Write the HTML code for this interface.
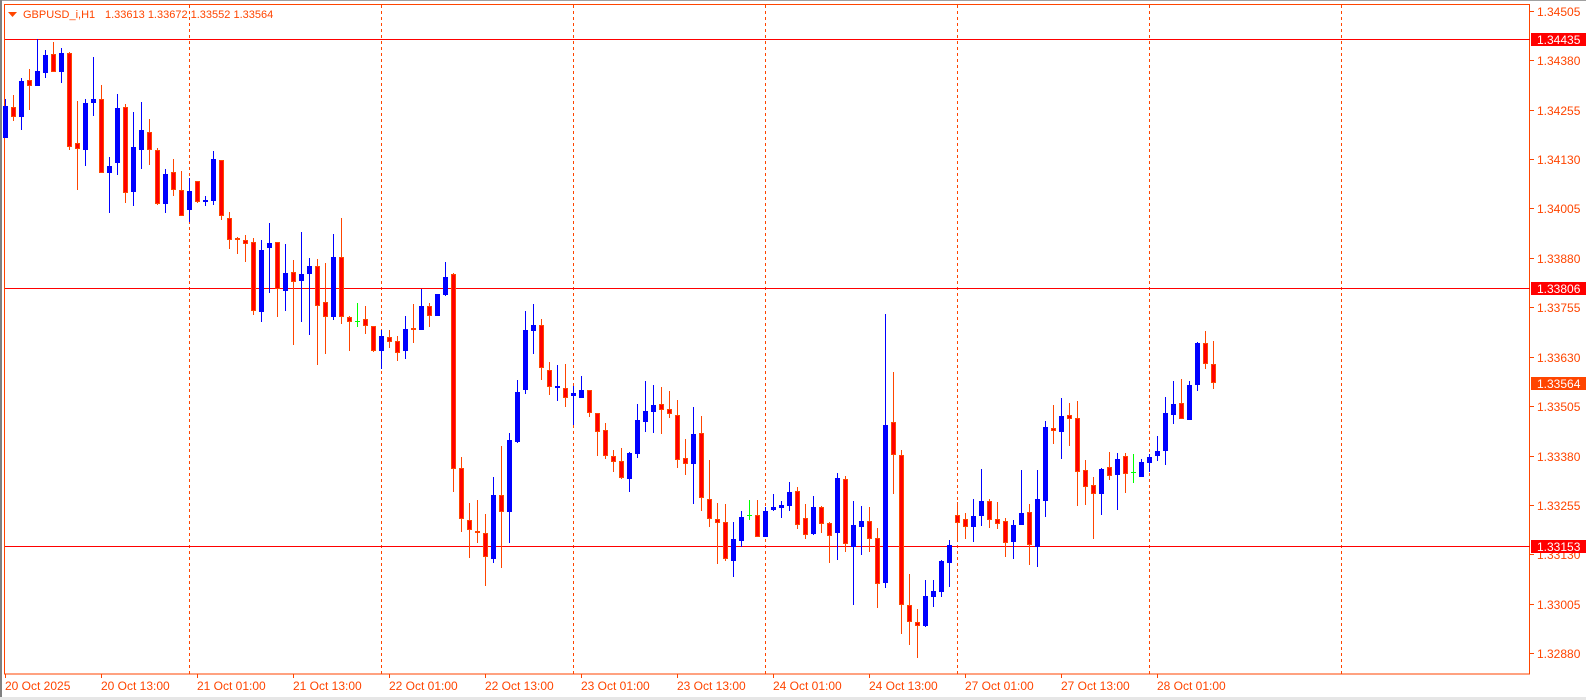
<!DOCTYPE html>
<html><head><meta charset="utf-8"><style>
html,body{margin:0;padding:0;background:#fff;}
svg{display:block;}
text{font-family:"Liberation Sans",sans-serif;}
</style></head><body>
<svg width="1586" height="700" viewBox="0 0 1586 700" xmlns="http://www.w3.org/2000/svg">
<rect x="0" y="0" width="1586" height="700" fill="#fff"/>
<rect x="0" y="0" width="1586" height="1" fill="#a0a0a0"/>
<rect x="0" y="0" width="2" height="700" fill="#808080"/>
<rect x="0" y="697" width="1586" height="3" fill="#e6e6e6"/>
<!-- frame -->
<rect x="4.5" y="4.5" width="1525" height="669.5" fill="none" stroke="#ff4500" stroke-width="1"/>
<!-- dashed separators -->
<g stroke="#ff4500" stroke-width="1" stroke-dasharray="3,3">
<path d="M189.5 5V674M381.5 5V674M573.5 5V674M765.5 5V674M957.5 5V674M1149.5 5V674M1341.5 5V674"/>
</g>
<!-- horizontal lines -->
<g stroke="#ff0000" stroke-width="1">
<path d="M5 39.5H1530M5 288.5H1530M5 546.5H1530"/>
</g>
<!-- wicks -->
<path fill="none" stroke="#0000ff" stroke-width="1" d="M5.5 99V138M21.5 78V130M37.5 39V86M45.5 50V78M61.5 48V83M85.5 99V166M93.5 57V116M109.5 157V213M117.5 94V175M133.5 112V206M141.5 102V169M165.5 169V213M189.5 178V222M205.5 196V206M213.5 151V205M261.5 240V322M269.5 223V293M285.5 244V311M301.5 232V322M309.5 258V335M333.5 234V320M381.5 330V369M405.5 316V359M421.5 289V330M437.5 294V316M445.5 262V296M493.5 477V563M509.5 433V543M517.5 380V443M525.5 311V394M533.5 304V354M557.5 365V401M573.5 386V425M581.5 376V398M629.5 452V492M637.5 404V458M645.5 381V432M653.5 385V433M693.5 407V504M733.5 522V577M741.5 511V547M765.5 507V537M773.5 494V511M781.5 501V518M789.5 482V511M813.5 496V535M837.5 473V560M853.5 501V605M861.5 506V555M885.5 314V588M925.5 580V627M933.5 580V607M941.5 560V597M949.5 540V587M973.5 499V542M981.5 469V526M1013.5 520V559M1021.5 470V525M1037.5 470V567M1045.5 421V517M1061.5 398V459M1101.5 468V515M1117.5 453V510M1141.5 459V477M1149.5 454V472M1157.5 436V461M1165.5 397V465M1173.5 381V424M1189.5 381V420M1197.5 342V391"/>
<path fill="none" stroke="#ff4500" stroke-width="1" d="M13.5 95V121M29.5 69V110M53.5 42V72M69.5 52V150M77.5 101V190M101.5 85V173M125.5 104V203M149.5 119V165M157.5 148V205M173.5 159V196M181.5 171V216M197.5 181V203M221.5 160V220M229.5 212V249M237.5 237V254M245.5 235V262M253.5 238V315M277.5 242V317M293.5 260V345M317.5 259V365M325.5 263V354M341.5 218V324M349.5 316V351M365.5 306V334M373.5 326V352M389.5 330V348M397.5 336V361M413.5 304V343M429.5 303V327M453.5 273V492M461.5 457V532M469.5 503V558M477.5 500V543M485.5 514V586M501.5 446V568M541.5 319V380M549.5 362V395M565.5 364V407M589.5 390V417M597.5 413V456M605.5 423V459M613.5 450V472M621.5 448V479M661.5 387V434M669.5 391V418M677.5 400V468M685.5 439V475M701.5 416V511M709.5 460V527M717.5 503V564M725.5 504V561M757.5 500V537M797.5 487V529M805.5 504V539M821.5 506V533M829.5 522V563M845.5 476V552M869.5 507V552M877.5 528V608M893.5 372V494M901.5 450V634M909.5 574V645M917.5 609V658M957.5 502V541M965.5 513V539M989.5 499V528M997.5 502V529M1005.5 518V557M1029.5 504V565M1053.5 405V444M1069.5 403V446M1077.5 401V506M1085.5 460V505M1093.5 477V539M1109.5 452V480M1125.5 453V493M1181.5 379V419M1205.5 331V369M1213.5 341V389"/>
<path fill="none" stroke="#00ff00" stroke-width="1" d="M357.5 303V327M355 321.5H360M749.5 500V520M747 515.5H752M1133.5 454V483M1131 472.5H1136"/>
<!-- bodies -->
<path fill="#0000ff" d="M3 106h5v32h-5zM19 81h5v36h-5zM35 71h5v15h-5zM43 55h5v18h-5zM59 53h5v19h-5zM83 103h5v47h-5zM91 99h5v4h-5zM107 166h5v7h-5zM115 108h5v55h-5zM131 147h5v45h-5zM139 130h5v20h-5zM163 174h5v30h-5zM187 191h5v19h-5zM203 200h5v2h-5zM211 159h5v42h-5zM259 250h5v62h-5zM267 243h5v5h-5zM283 273h5v18h-5zM299 274h5v7h-5zM307 266h5v8h-5zM331 257h5v60h-5zM379 336h5v15h-5zM403 329h5v22h-5zM419 306h5v24h-5zM435 294h5v22h-5zM443 277h5v18h-5zM491 495h5v64h-5zM507 440h5v72h-5zM515 392h5v50h-5zM523 330h5v60h-5zM531 325h5v6h-5zM555 386h5v2h-5zM571 393h5v3h-5zM579 390h5v8h-5zM627 453h5v26h-5zM635 420h5v34h-5zM643 411h5v11h-5zM651 405h5v7h-5zM691 434h5v30h-5zM731 539h5v22h-5zM739 517h5v24h-5zM763 511h5v26h-5zM771 507h5v3h-5zM779 505h5v3h-5zM787 492h5v14h-5zM811 507h5v27h-5zM835 478h5v55h-5zM851 525h5v22h-5zM859 521h5v6h-5zM883 425h5v158h-5zM923 596h5v30h-5zM931 591h5v6h-5zM939 561h5v31h-5zM947 545h5v18h-5zM971 516h5v11h-5zM979 501h5v15h-5zM1011 525h5v17h-5zM1019 513h5v12h-5zM1035 499h5v48h-5zM1043 427h5v74h-5zM1059 416h5v16h-5zM1099 469h5v25h-5zM1115 459h5v16h-5zM1139 462h5v15h-5zM1147 457h5v6h-5zM1155 451h5v5h-5zM1163 413h5v38h-5zM1171 404h5v11h-5zM1187 385h5v35h-5zM1195 343h5v42h-5z"/>
<path fill="#ff0000" stroke="#ff4500" stroke-width="1" d="M11.5 107.5h4v9h-4zM27.5 80.5h4v5h-4zM51.5 54.5h4v17h-4zM67.5 53.5h4v93h-4zM75.5 143.5h4v5h-4zM99.5 99.5h4v73h-4zM123.5 107.5h4v85h-4zM147.5 132.5h4v17h-4zM155.5 150.5h4v53h-4zM171.5 172.5h4v17h-4zM179.5 190.5h4v25h-4zM195.5 181.5h4v20h-4zM219.5 160.5h4v55h-4zM227.5 218.5h4v21h-4zM235.5 238.5h4v1h-4zM243.5 240.5h4v3h-4zM251.5 242.5h4v68h-4zM275.5 242.5h4v46h-4zM291.5 272.5h4v9h-4zM315.5 266.5h4v39h-4zM323.5 302.5h4v14h-4zM339.5 257.5h4v59h-4zM347.5 317.5h4v4h-4zM363.5 319.5h4v6h-4zM371.5 326.5h4v24h-4zM387.5 337.5h4v4h-4zM395.5 341.5h4v11h-4zM411.5 328.5h4v1h-4zM427.5 306.5h4v9h-4zM451.5 274.5h4v194h-4zM459.5 468.5h4v50h-4zM467.5 520.5h4v9h-4zM475.5 531.5h4v1h-4zM483.5 533.5h4v23h-4zM499.5 495.5h4v16h-4zM539.5 325.5h4v42h-4zM547.5 370.5h4v16h-4zM563.5 388.5h4v9h-4zM587.5 390.5h4v22h-4zM595.5 413.5h4v18h-4zM603.5 430.5h4v25h-4zM611.5 456.5h4v5h-4zM619.5 461.5h4v16h-4zM659.5 404.5h4v5h-4zM667.5 409.5h4v4h-4zM675.5 415.5h4v44h-4zM683.5 458.5h4v5h-4zM699.5 433.5h4v64h-4zM707.5 499.5h4v19h-4zM715.5 519.5h4v3h-4zM723.5 522.5h4v36h-4zM755.5 515.5h4v21h-4zM795.5 491.5h4v33h-4zM803.5 518.5h4v16h-4zM819.5 507.5h4v16h-4zM827.5 523.5h4v12h-4zM843.5 479.5h4v64h-4zM867.5 521.5h4v17h-4zM875.5 538.5h4v45h-4zM891.5 422.5h4v32h-4zM899.5 455.5h4v149h-4zM907.5 605.5h4v16h-4zM915.5 622.5h4v3h-4zM955.5 515.5h4v7h-4zM963.5 519.5h4v7h-4zM987.5 501.5h4v18h-4zM995.5 519.5h4v4h-4zM1003.5 521.5h4v21h-4zM1027.5 512.5h4v32h-4zM1051.5 428.5h4v2h-4zM1067.5 415.5h4v3h-4zM1075.5 418.5h4v53h-4zM1083.5 470.5h4v16h-4zM1091.5 485.5h4v8h-4zM1107.5 467.5h4v8h-4zM1123.5 456.5h4v17h-4zM1179.5 403.5h4v15h-4zM1203.5 343.5h4v20h-4zM1211.5 364.5h4v18h-4z"/>
<!-- title -->
<path d="M8 12H17L12.5 17Z" fill="#ff4500"/>
<text x="23" y="18" font-size="11" fill="#ff4500">GBPUSD_i,H1</text>
<text x="105" y="18" font-size="11" fill="#ff4500">1.33613 1.33672 1.33552 1.33564</text>
<!-- price axis ticks -->
<path stroke="#ff4500" stroke-width="1" d="M1530 11.5H1534M1530 60.5H1534M1530 110.5H1534M1530 159.5H1534M1530 208.5H1534M1530 258.5H1534M1530 307.5H1534M1530 357.5H1534M1530 406.5H1534M1530 456.5H1534M1530 505.5H1534M1530 554.5H1534M1530 604.5H1534M1530 653.5H1534"/>
<g font-size="12" fill="#ff4500">
<text x="1537" y="16">1.34505</text>
<text x="1537" y="65">1.34380</text>
<text x="1537" y="115">1.34255</text>
<text x="1537" y="164">1.34130</text>
<text x="1537" y="213">1.34005</text>
<text x="1537" y="263">1.33880</text>
<text x="1537" y="312">1.33755</text>
<text x="1537" y="362">1.33630</text>
<text x="1537" y="411">1.33505</text>
<text x="1537" y="461">1.33380</text>
<text x="1537" y="510">1.33255</text>
<text x="1537" y="559">1.33130</text>
<text x="1537" y="609">1.33005</text>
<text x="1537" y="658">1.32880</text>
</g>
<!-- price boxes -->
<rect x="1531" y="33" width="55" height="13" fill="#ff0000"/>
<rect x="1531" y="282" width="55" height="13" fill="#ff0000"/>
<rect x="1531" y="540" width="55" height="13" fill="#ff0000"/>
<rect x="1531" y="377" width="55" height="13" fill="#ff4500"/>
<g font-size="12" fill="#ffffff">
<text x="1537" y="44">1.34435</text>
<text x="1537" y="293">1.33806</text>
<text x="1537" y="551">1.33153</text>
<text x="1537" y="388">1.33564</text>
</g>
<!-- date axis -->
<path stroke="#ff4500" stroke-width="1" d="M5.5 674V678M101.5 674V678M197.5 674V678M293.5 674V678M389.5 674V678M485.5 674V678M581.5 674V678M677.5 674V678M773.5 674V678M869.5 674V678M965.5 674V678M1061.5 674V678M1157.5 674V678"/>
<g font-size="12" fill="#ff4500">
<text x="5" y="690">20 Oct 2025</text>
<text x="101" y="690">20 Oct 13:00</text>
<text x="197" y="690">21 Oct 01:00</text>
<text x="293" y="690">21 Oct 13:00</text>
<text x="389" y="690">22 Oct 01:00</text>
<text x="485" y="690">22 Oct 13:00</text>
<text x="581" y="690">23 Oct 01:00</text>
<text x="677" y="690">23 Oct 13:00</text>
<text x="773" y="690">24 Oct 01:00</text>
<text x="869" y="690">24 Oct 13:00</text>
<text x="965" y="690">27 Oct 01:00</text>
<text x="1061" y="690">27 Oct 13:00</text>
<text x="1157" y="690">28 Oct 01:00</text>
</g>
</svg>
</body></html>
